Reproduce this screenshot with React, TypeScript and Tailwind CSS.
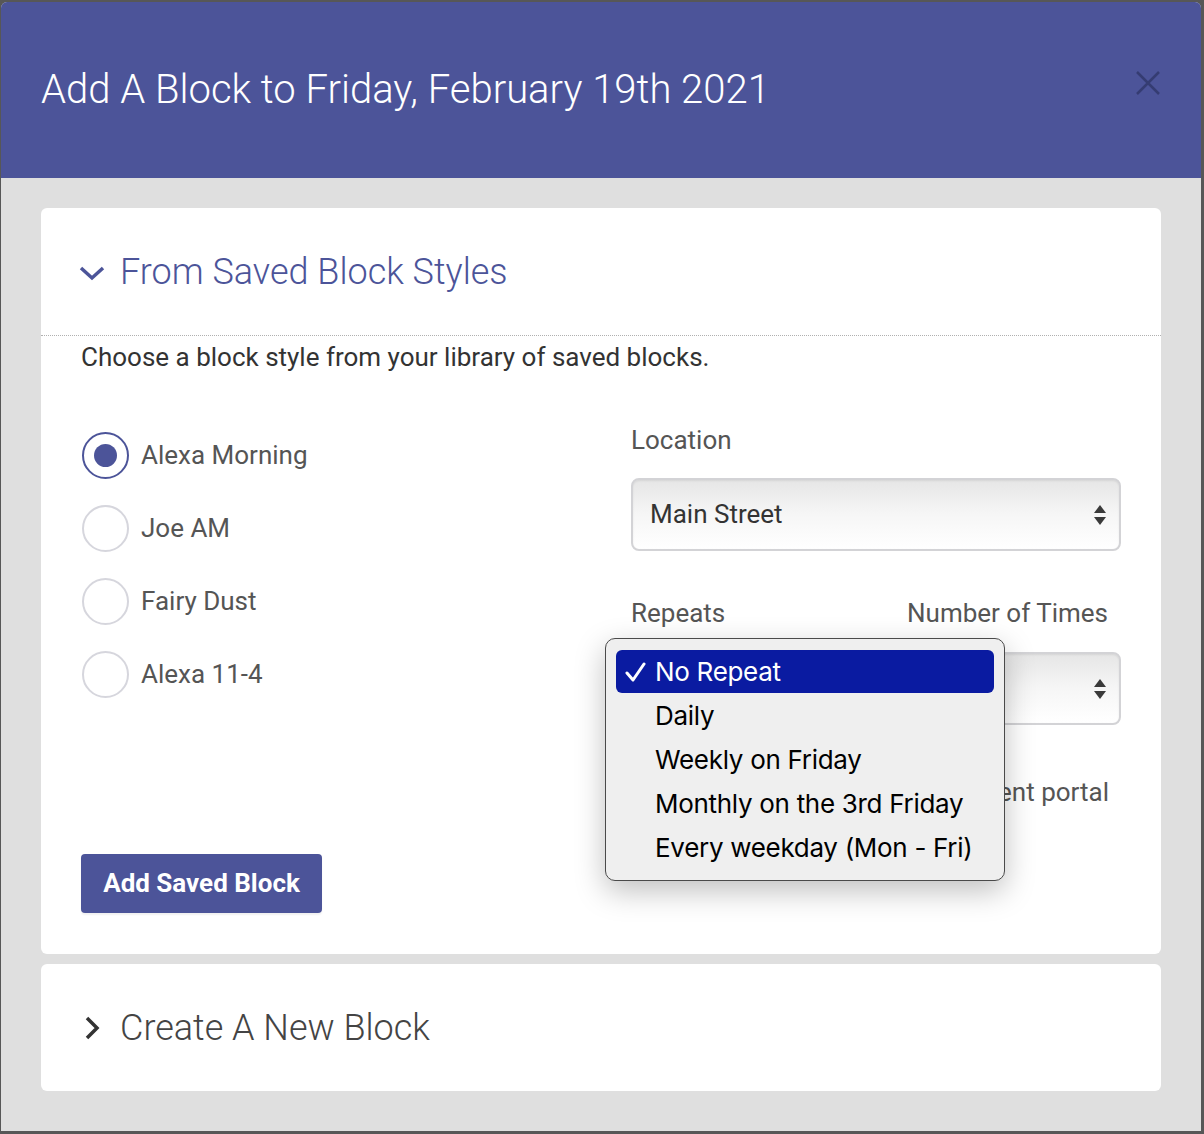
import React from "react";

const PURPLE = "#4c5499";

const BLOCKS = ["Alexa Morning", "Joe AM", "Fairy Dust", "Alexa 11-4"];
const REPEATS = ["No Repeat", "Daily", "Weekly on Friday", "Monthly on the 3rd Friday", "Every weekday (Mon - Fri)"];

function Arrows() {
  return (
    <svg width="14" height="24" viewBox="0 0 14 24" className="shrink-0">
      <path d="M7 2 L13 10 L1 10 Z" fill="#3a3a3a" />
      <path d="M7 22 L13 14 L1 14 Z" fill="#3a3a3a" />
    </svg>
  );
}

function SelectBox({ value }: { value?: string }) {
  return (
    <div className="flex h-[73px] items-center justify-between rounded-[8px] border-2 border-[#d3d3d6] bg-gradient-to-b from-[#e6e6e6] via-[#f6f6f6] to-white pl-[17px] pr-[12px] shadow-[inset_0_1px_2px_rgba(0,0,0,0.08)]">
      <span className="text-[26px] text-[#333]">{value}</span>
      <Arrows />
    </div>
  );
}

function Radio({ checked, label }: { checked?: boolean; label: string }) {
  return (
    <div className="flex h-[46px] items-center gap-[12px] pl-[1px]">
      <span
        className={
          checked
            ? "flex h-[47px] w-[47px] items-center justify-center rounded-full border-2 border-[#4c5499]"
            : "flex h-[47px] w-[47px] items-center justify-center rounded-full border-2 border-[#d6d6dd]"
        }
      >
        {checked && <span className="h-[23px] w-[23px] rounded-full bg-[#4c5499]" />}
      </span>
      <span className="text-[26px] text-[#555]">{label}</span>
    </div>
  );
}

function RepeatMenu() {
  return (
    <div
      className="absolute left-[-26px] top-[214px] w-[400px] rounded-[10px] border border-[#4a4a4a] bg-[#efefef] pb-[11px] pl-[10px] pr-[10px] pt-[11px] shadow-[0_10px_30px_rgba(0,0,0,0.25)]"
      style={{ fontFamily: "Inter, 'Noto Sans', sans-serif" }}
    >
      {REPEATS.map((r, i) => (
        <div
          key={r}
          className={
            i === 0
              ? "flex h-[43px] items-center rounded-[6px] bg-[#0a1ba1] text-white"
              : "flex h-[44px] items-center text-black"
          }
        >
          <span className="flex w-[39px] items-center pl-[9px]">
            {i === 0 && (
              <svg width="22" height="22" viewBox="0 0 22 22">
                <path d="M2 12 L8 19 L19 3" stroke="white" strokeWidth="3" fill="none" strokeLinecap="round" strokeLinejoin="round" />
              </svg>
            )}
          </span>
          <span className="text-[26px] tracking-[-0.3px]">{r}</span>
        </div>
      ))}
    </div>
  );
}

export default function App() {
  return (
    <div
      className="h-[1134px] w-[1204px] overflow-hidden bg-[#575757] pl-[1px] pt-[2px]"
      style={{ fontFamily: "Roboto, 'Liberation Sans', sans-serif" }}
    >
      <div className="flex h-[1129px] w-[1200px] flex-col overflow-hidden rounded-t-[6px] bg-[#dfdfdf]">
        <header className="flex h-[176px] shrink-0 items-center justify-between bg-[#4c5499] pl-[40px] pr-[40px]">
          <h1 className="text-[40px] font-light text-white">Add A Block to Friday, February 19th 2021</h1>
          <svg width="26" height="26" viewBox="0 0 26 26" className="mb-[14px]">
            <path d="M2 2 L24 24 M24 2 L2 24" stroke="#353c72" strokeWidth="2.5" />
          </svg>
        </header>

        <div className="flex flex-col gap-[10px] px-[40px] pb-[40px] pt-[30px]">
          <section className="rounded-[6px] bg-white pb-[41px]">
            <div className="flex h-[128px] items-center gap-[15px] border-b border-dotted border-[#b0b0b0] pl-[38px]">
              <svg width="26" height="18" viewBox="0 0 26 18" className="mt-[2px]">
                <path d="M2 4 L13 14 L24 4" stroke={PURPLE} strokeWidth="3.5" fill="none" />
              </svg>
              <h2 className="text-[36px] font-light text-[#4c5499]">From Saved Block Styles</h2>
            </div>
            <div className="px-[40px]">
              <p className="mt-[5px] text-[26px] leading-[32px] text-[#333]">
                Choose a block style from your library of saved blocks.
              </p>
              <div className="mt-[51px] grid grid-cols-[1fr_490px] gap-[10px]">
                <div className="flex flex-col gap-[27px] pt-[8px]">
                  {BLOCKS.map((b, i) => (
                    <Radio key={b} label={b} checked={i === 0} />
                  ))}
                </div>
                <div className="relative">
                  <div className="text-[26px] leading-[32px] text-[#555]">Location</div>
                  <div className="mt-[22px]">
                    <SelectBox value="Main Street" />
                  </div>
                  <div className="mt-[46px] grid grid-cols-[250px_1fr] gap-[26px]">
                    <div>
                      <div className="text-[26px] leading-[32px] text-[#555]">Repeats</div>
                      <div className="mt-[23px]">
                        <SelectBox />
                      </div>
                    </div>
                    <div>
                      <div className="text-[26px] leading-[32px] text-[#555]">Number of Times</div>
                      <div className="mt-[23px]">
                        <SelectBox />
                      </div>
                    </div>
                  </div>
                  <div className="mt-[51px] flex items-center justify-end gap-[10px] pr-[12px]">
                    <span className="h-[22px] w-[22px] rounded-[4px] border-2 border-[#ccc]" />
                    <span className="text-[26px] leading-[32px] text-[#555]">Show on client portal</span>
                  </div>
                  <RepeatMenu />
                </div>
              </div>
              <button className="mt-[46px] h-[59px] w-[241px] rounded-[4px] bg-[#4c5499] text-[26px] font-bold text-white shadow-[0_2px_2px_rgba(0,0,0,0.06)]">
                Add Saved Block
              </button>
            </div>
          </section>

          <section className="flex h-[127px] items-center gap-[19px] rounded-[6px] bg-white pl-[42px]">
            <svg width="18" height="26" viewBox="0 0 18 26">
              <path d="M4 3 L14 13 L4 23" stroke="#333" strokeWidth="3.5" fill="none" />
            </svg>
            <h2 className="text-[36px] font-light text-[#444]">Create A New Block</h2>
          </section>
        </div>
      </div>
    </div>
  );
}
